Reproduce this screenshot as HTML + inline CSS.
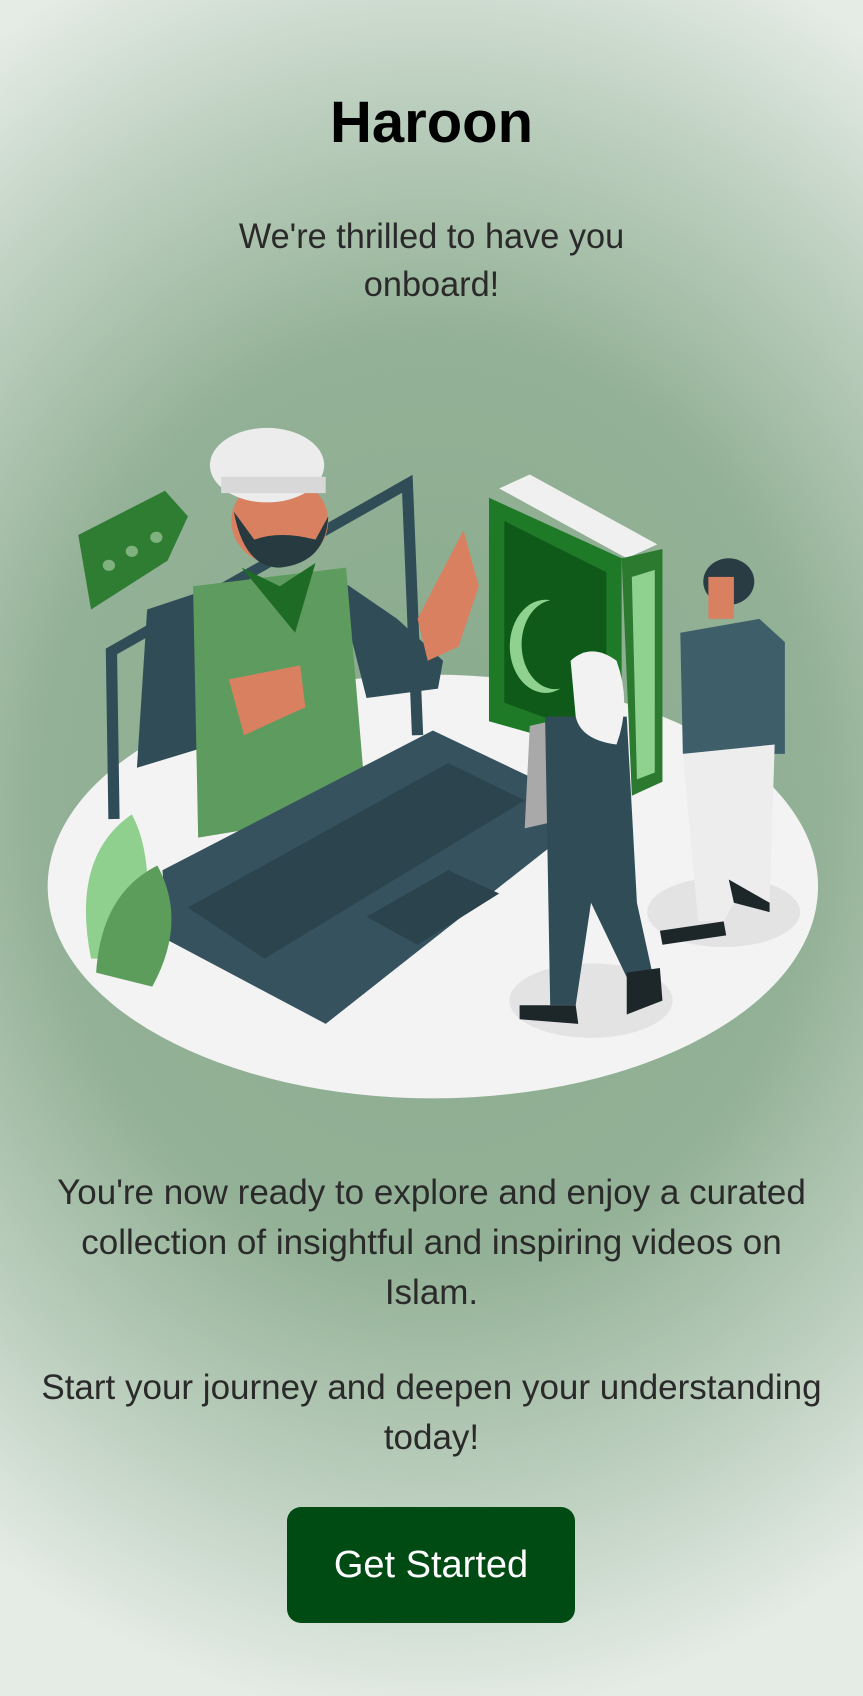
<!DOCTYPE html>
<html><head><meta charset="utf-8"><style>
html,body{margin:0;padding:0}
body{width:863px;height:1696px;position:relative;overflow:hidden;font-family:"Liberation Sans",sans-serif;
background:radial-gradient(ellipse 780px 920px at 431px 800px,#89aa8d 0%,#93b196 50%,#c2d3c4 80%,#e5ece6 100%);}
.t{position:absolute;left:-100px;width:1063px;text-align:center;color:#2a2a2a}
h1{position:absolute;left:0;width:863px;text-align:center;margin:0;top:88px;font-size:58px;font-weight:bold;color:#000;line-height:70px}
.btn{position:absolute;left:287px;top:1507px;width:288px;height:116px;background:#004b14;border-radius:14px;color:#fff;font-size:38px;line-height:116px;text-align:center}
</style></head><body>
<h1>Haroon</h1>
<div class="t" style="top:213px;font-size:35px;line-height:48px;transform:scaleX(0.98)">We're thrilled to have you<br>onboard!</div>
<svg style="position:absolute;left:40px;top:400px" width="800" height="730" viewBox="0 0 1568 1568" preserveAspectRatio="none">
<ellipse cx="770" cy="1045" rx="755" ry="455" fill="#f3f3f3"/>
<ellipse cx="1080" cy="1290" rx="160" ry="80" fill="#e3e3e3"/>
<ellipse cx="1340" cy="1100" rx="150" ry="75" fill="#e3e3e3"/>
<polyline points="145,900 140,540 720,180 740,720" fill="none" stroke="#2f4c57" stroke-width="22"/>
<polygon points="75,290 245,195 290,250 250,345 100,450" fill="#2e7d32"/>
<circle cx="135" cy="355" r="12" fill="#7fb27f"/><circle cx="180" cy="325" r="12" fill="#7fb27f"/><circle cx="228" cy="295" r="12" fill="#7fb27f"/>
<polygon points="210,450 320,410 340,740 190,790" fill="#2f4c57"/>
<polygon points="580,380 700,470 790,560 780,620 640,640" fill="#2f4c57"/>
<polygon points="300,400 600,360 640,880 310,940" fill="#5e9b5e"/>
<polygon points="740,470 830,280 860,400 820,530 760,560" fill="#d98060"/>
<polygon points="370,600 510,570 520,660 400,720" fill="#d98060"/>
<circle cx="470" cy="260" r="95" fill="#d98060"/>
<path d="M380,240 Q400,360 470,360 Q560,350 565,250 L540,300 Q470,280 420,300 Z" fill="#263a40"/>
<ellipse cx="445" cy="140" rx="112" ry="80" fill="#ececec"/>
<rect x="355" y="165" width="205" height="35" fill="#d8d8d8"/>
<polygon points="395,360 470,400 540,350 500,500" fill="#1e6b25"/>
<polygon points="240,1010 770,710 1000,830 1000,960 560,1340 250,1160" fill="#35525e"/>
<polygon points="290,1090 800,780 950,860 440,1200" fill="#2b444e"/>
<polygon points="640,1110 800,1010 900,1060 740,1170" fill="#2a434d"/>
<path d="M100,1200 Q60,980 180,890 Q230,990 200,1200 Z" fill="#8fd08f"/>
<path d="M110,1230 Q120,1060 230,1000 Q290,1120 220,1260 Z" fill="#5c9d5c"/>
<polygon points="900,190 960,160 1210,310 1150,340" fill="#f0f0f0"/>
<polygon points="880,210 1140,340 1140,770 880,690" fill="#1f7a28"/>
<polygon points="910,260 1110,370 1110,730 910,650" fill="#0f5a19"/>
<path d="M1000,430 A70,100 0 1 0 1020,620 A55,80 0 1 1 1000,430 Z" fill="#8fd28f"/>
<polygon points="1140,340 1220,320 1220,820 1160,850" fill="#2b7a30"/>
<polygon points="1160,380 1205,365 1205,800 1170,815" fill="#8fd28f"/>
<polygon points="960,700 1040,680 1030,900 950,920" fill="#a9a9a9"/>
<polygon points="990,680 1150,680 1170,1080 1200,1230 1150,1240 1080,1080 1050,1300 1000,1300" fill="#2f4c57"/>
<path d="M1040,560 Q1080,520 1130,560 Q1160,650 1130,740 Q1060,730 1050,680 Z" fill="#f2f2f2"/>
<polygon points="940,1300 1050,1300 1055,1340 940,1330" fill="#1d2629"/>
<polygon points="1150,1230 1215,1220 1220,1290 1150,1320" fill="#1d2629"/>
<circle cx="1350" cy="390" r="50" fill="#2a3c43"/>
<rect x="1310" y="380" width="50" height="90" fill="#d98060"/>
<polygon points="1255,500 1410,470 1460,520 1460,760 1260,760" fill="#3e5f6a"/>
<polygon points="1260,760 1440,740 1430,1080 1370,1060 1340,1120 1290,1120" fill="#ededed"/>
<polygon points="1215,1140 1340,1120 1345,1150 1220,1170" fill="#1d2629"/>
<polygon points="1350,1030 1430,1080 1430,1100 1360,1080" fill="#1d2629"/>
</svg>
<div class="t" style="top:1168px;font-size:35px;line-height:50px;transform:scaleX(1.0)">You're now ready to explore and enjoy a curated<br>collection of insightful and inspiring videos on<br>Islam.</div>
<div class="t" style="top:1363px;font-size:35px;line-height:50px;transform:scaleX(1.0)">Start your journey and deepen your understanding<br>today!</div>
<div class="btn">Get Started</div>
</body></html>
